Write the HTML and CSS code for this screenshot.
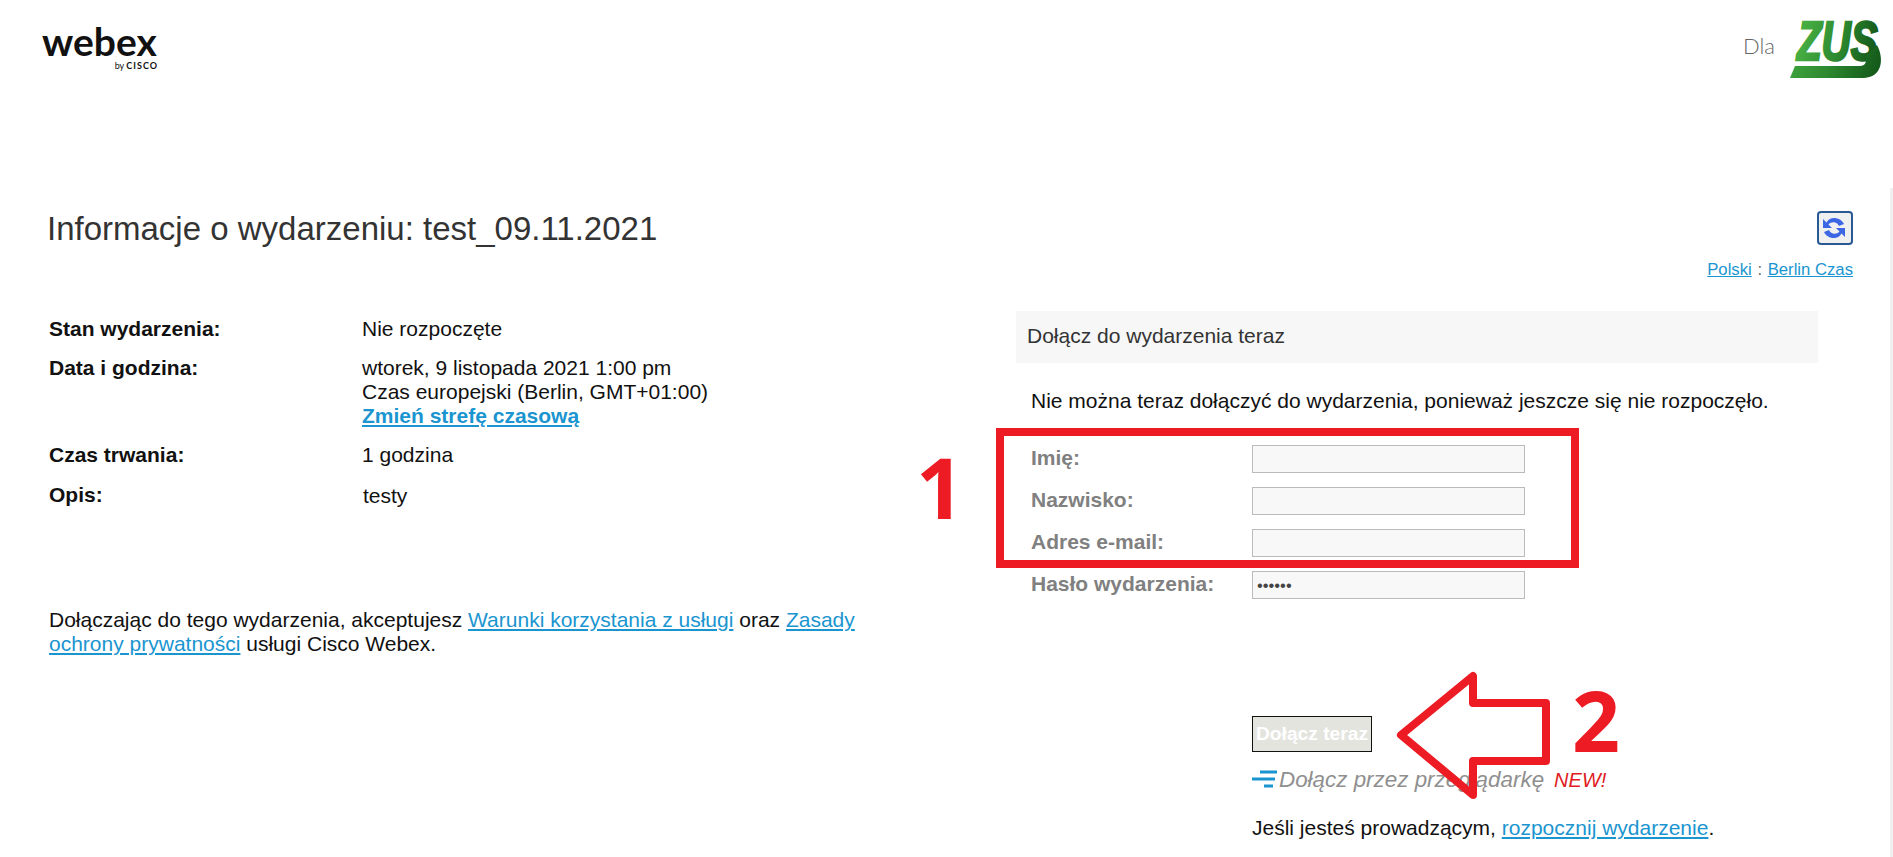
FILE: index.html
```html
<!DOCTYPE html>
<html lang="pl">
<head>
    <meta charset="UTF-8">
    <meta name="viewport" content="width=device-width, initial-scale=1.0">
    <title>Informacje o wydarzeniu</title>
    <link rel="stylesheet" href="styles.css">
</head>
<body>

    <header class="top-bar">
        <div class="webex-logo">
            <span class="webex-word">webex</span>
            <span class="webex-by">by <b>CISCO</b></span>
        </div>
        <div class="client">
            <span class="client-for">Dla</span>
            <svg class="zus-logo" width="94" height="62" viewBox="0 0 94 62">
                <defs>
                    <linearGradient id="zusGreen" gradientUnits="userSpaceOnUse" x1="0" y1="0" x2="94" y2="30">
                        <stop offset="0" stop-color="#46ad42"/>
                        <stop offset="0.5" stop-color="#2e8b30"/>
                        <stop offset="1" stop-color="#155a1b"/>
                    </linearGradient>
                </defs>
                <text class="zus-text" transform="translate(7 42) scale(0.72 1)" fill="url(#zusGreen)" stroke="url(#zusGreen)" stroke-width="2.6">ZUS</text>
                <path d="M0 60L5 48H70C75 48 77 44 76 38L87 27C94 40 93 59 74 60Z" fill="url(#zusGreen)"/>
            </svg>
        </div>
    </header>

    <main class="event-page">
        <div class="title-row">
            <h1>Informacje o wydarzeniu: test_09.11.2021</h1>
            <div class="tools">
                <button class="refresh-btn" aria-label="Odśwież">
                    <svg width="26" height="26" viewBox="0 0 26 26">
                        <path id="syncArrow" d="M2 4V13H11L7.5 9.5C9 7.5 12 7 14 7.5C16 8 17 9 18 11L23 9C21 5 17 3 13 3C10 3 7.5 4 5.5 7.5Z" fill="#3c66e4"/>
                        <use href="#syncArrow" transform="rotate(180 13 13)"/>
                    </svg>
                </button>
                <div class="locale"><a href="#">Polski</a> <span class="sep">:</span> <a href="#">Berlin Czas</a></div>
            </div>
        </div>

        <div class="columns">
            <section class="info">
                <dl class="info-list">
                    <dt>Stan wydarzenia:</dt>
                    <dd>Nie rozpoczęte</dd>
                    <dt>Data i godzina:</dt>
                    <dd>wtorek, 9 listopada 2021 1:00 pm<br>Czas europejski (Berlin, GMT+01:00)<br><a class="tz-link" href="#">Zmień strefę czasową</a></dd>
                    <dt>Czas trwania:</dt>
                    <dd>1 godzina</dd>
                    <dt class="desc-label">Opis:</dt>
                    <dd class="desc">testy</dd>
                </dl>
                <p class="terms">Dołączając do tego wydarzenia, akceptujesz <a href="#">Warunki korzystania z usługi</a> oraz <a href="#">Zasady ochrony prywatności</a> usługi Cisco Webex.</p>
            </section>

            <section class="join">
                <h2 class="join-head">Dołącz do wydarzenia teraz</h2>
                <p class="join-note">Nie można teraz dołączyć do wydarzenia, ponieważ jeszcze się nie rozpoczęło.</p>
                <form class="join-form">
                    <label for="firstName">Imię:</label>
                    <input id="firstName" type="text">
                    <label for="lastName">Nazwisko:</label>
                    <input id="lastName" type="text">
                    <label for="email">Adres e-mail:</label>
                    <input id="email" type="text">
                    <label for="pass">Hasło wydarzenia:</label>
                    <input id="pass" type="password" value="123456">
                </form>
                <div class="join-actions">
                    <button class="join-btn" type="button">Dołącz teraz</button>
                    <div class="browser-join">
                        <svg width="26" height="20" viewBox="0 0 26 20">
                            <path d="M8 2H25M0 9H23M12 16H21" stroke="#1a95d0" stroke-width="3" fill="none"/>
                        </svg>
                        <a class="browser-link" href="#">Dołącz przez przeglądarkę</a>
                        <span class="new-tag">NEW!</span>
                    </div>
                    <p class="host-line">Jeśli jesteś prowadzącym, <a href="#">rozpocznij wydarzenie</a>.</p>
                </div>
            </section>
        </div>
    </main>

    <!-- annotations painted over the screenshot -->
    <div class="mark-box"></div>
    <span class="mark-num mark-one">1</span>
    <span class="mark-num mark-two">2</span>
    <svg class="mark-arrow" width="160" height="132" viewBox="0 0 160 132">
        <path d="M5 65L77 6V33H150V91H77V125Z" fill="none" stroke="#ed1c24" stroke-width="8" stroke-linejoin="round"/>
    </svg>

</body>
</html>
```

FILE: styles.css
```css
* { box-sizing: border-box; }
html, body { margin: 0; height: 100%; overflow: hidden; }
body { font-family: "Liberation Sans", Arial, sans-serif; color: #111; background: #fff; font-size: 21px; }
a { color: #1a95d0; }

.top-bar { display: flex; justify-content: space-between; height: 188px; padding: 18px 9px 0 42px; }
.webex-logo { display: flex; flex-direction: column; width: 116px; padding-top: 4px; }
.webex-word { font-family: Lato, sans-serif; font-weight: 700; font-size: 39px; line-height: 38px; color: #111; }
.webex-by { font-family: Lato, sans-serif; font-size: 9px; line-height: 10px; text-align: right; margin-top: 1px; }
.webex-by b { letter-spacing: 1px; font-size: 9px; }
.client { display: flex; align-items: flex-start; gap: 15px; }
.client-for { font-family: Lato, sans-serif; font-weight: 300; font-size: 22px; color: #666; margin-top: 14px; }
.zus-text { font-family: "Liberation Sans", sans-serif; font-weight: 700; font-style: italic; font-size: 56px; }

.event-page { height: 669px; border-right: 3px solid #f0f0f0; padding-left: 47px; padding-right: 37px; }
.title-row { display: flex; justify-content: space-between; height: 123px; padding-top: 23px; }
h1 { margin: 0; font-size: 33px; font-weight: 400; color: #333; line-height: 36px; }
.tools { display: flex; flex-direction: column; align-items: flex-end; }
.refresh-btn { width: 36px; height: 34px; padding: 3px; background: #f0f0f0; border: 2px solid #2a5a94; border-radius: 4px; }
.refresh-btn svg { display: block; margin: -1px; }
.locale { font-size: 16.7px; margin-top: 15px; color: #666; }
.sep { margin: 0 1px; }

.columns { display: grid; grid-template-columns: 969px 802px; }
.info { padding-left: 2px; }
.info-list { display: grid; grid-template-columns: 313px 1fr; row-gap: 15px; margin: 6px 0 0; line-height: 24px; }
.info-list dt { font-weight: 700; }
.info-list dd { margin: 0; }
.desc-label { margin-top: 1px; }
.desc { padding-left: 1px; padding-top: 2px; }
.tz-link { font-weight: 700; }
.terms { width: 830px; margin: 100px 0 0; line-height: 24px; }

.join-head { margin: 0; height: 52px; padding: 0 11px; background: #f7f7f7; font-size: 21px; font-weight: 400; line-height: 50px; color: #333; }
.join-note { margin: 26px 0 0 15px; line-height: 24px; }
.join-form { display: grid; grid-template-columns: 221px 273px; row-gap: 14px; margin: 32px 0 0 15px; align-items: center; }
.join-form label { font-weight: 700; color: #808080; font-size: 21px; margin-top: -2px; }
.join-form input { height: 28px; border: 1px solid #bbb; background: #f8f8f8; padding: 0 4px; margin: 0; border-radius: 0; outline: none; color: #444; font-size: 16.5px; }
.join-actions { margin: 117px 0 0 236px; }
.join-btn { display: block; width: 120px; height: 36px; border: 1px solid #111; background: #e4e4df; color: #fff; font: 700 19.2px "Liberation Sans", sans-serif; padding: 0; white-space: nowrap; }
.browser-join { display: flex; align-items: center; margin-top: 14px; height: 28px; }
.browser-link { font-style: italic; font-size: 22.4px; color: #8f8f8f; text-decoration: none; margin-left: 1px; }
.new-tag { font-style: italic; font-size: 20px; color: #e01b22; margin-left: 10px; }
.host-line { margin: 22px 0 0; line-height: 24px; }

.mark-box { position: absolute; left: 996px; top: 428px; width: 583px; height: 140px; border: 8px solid #ed1c24; }
.mark-num { position: absolute; font-family: "Open Sans", sans-serif; font-weight: 700; font-size: 84px; line-height: 84px; color: #ed1c24; }
.mark-one { left: 916px; top: 445px; }
.mark-two { left: 1572px; top: 678px; }
.mark-arrow { position: absolute; left: 1396px; top: 670px; }
```
